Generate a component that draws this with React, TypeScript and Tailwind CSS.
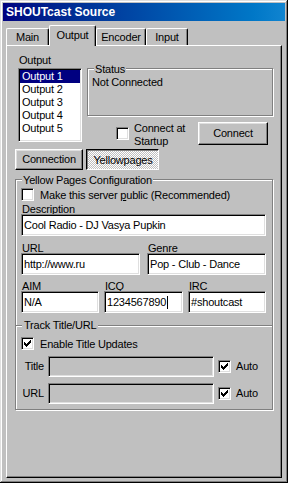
import React from "react";

const sunken =
  "border border-t-[#808080] border-l-[#808080] border-r-white border-b-white shadow-[inset_1px_1px_0_#000,inset_-1px_-1px_0_#dfdfdf]";
const raised =
  "border border-t-white border-l-white border-r-black border-b-black shadow-[inset_-1px_-1px_0_#808080,inset_1px_1px_0_#dfdfdf]";
const etched = "border border-[#808080] shadow-[inset_1px_1px_0_#fff,1px_1px_0_#fff]";

function Check({ checked }: { checked?: boolean }) {
  return (
    <div className={`relative w-[13px] h-[13px] shrink-0 bg-white ${sunken}`}>
      {checked && (
        <svg
          width="7"
          height="7"
          viewBox="0 0 7 7"
          shapeRendering="crispEdges"
          className="absolute left-[2px] top-[2px]"
        >
          <path
            d="M0 2h1v3h-1z M1 3h1v3h-1z M2 4h1v3h-1z M3 3h1v3h-1z M4 2h1v3h-1z M5 1h1v3h-1z M6 0h1v3h-1z"
            fill="#000"
          />
        </svg>
      )}
    </div>
  );
}

function Field({
  className,
  children,
  disabled,
}: {
  className: string;
  children?: React.ReactNode;
  disabled?: boolean;
}) {
  return (
    <div
      className={`${className} ${sunken} ${disabled ? "bg-[#c0c0c0]" : "bg-white"} flex items-center pl-[2px] whitespace-nowrap overflow-hidden`}
    >
      {children}
    </div>
  );
}

function Tab({ label, className }: { label: string; className: string }) {
  return (
    <div
      className={`${className} h-[17px] border-l border-t border-r border-l-white border-t-white border-r-black rounded-t-[2px] shadow-[inset_-1px_0_0_#808080] pt-[2px] text-center`}
    >
      {label}
    </div>
  );
}

function ActiveTab({ label, className }: { label: string; className: string }) {
  return (
    <div
      className={`${className} relative z-10 -mb-px h-[21px] bg-[#c0c0c0] border-l border-t border-r border-l-white border-t-white border-r-black rounded-t-[2px] shadow-[inset_-1px_0_0_#808080] pt-[3px] text-center`}
    >
      {label}
    </div>
  );
}

export default function App() {
  return (
    <div className="w-[288px] h-[483px] bg-[#c0c0c0] p-[3px] flex flex-col font-['Liberation_Sans',Arial,sans-serif] text-[11px] leading-[13px] tracking-[-0.2px] text-black shadow-[inset_-1px_-1px_0_#000,inset_1px_1px_0_#dfdfdf,inset_-2px_-2px_0_#808080,inset_2px_2px_0_#fff]">
      {/* Title bar */}
      <div className="h-[18px] shrink-0 bg-linear-to-r from-[#000080] to-[#1084d0] pl-[3px] pt-px text-white font-bold text-[12px] leading-[17px] tracking-normal">
        SHOUTcast Source
      </div>

      {/* Tabs */}
      <div className="mt-[4px] ml-[3px] h-[20px] shrink-0 flex items-end">
        <Tab label="Main" className="w-[43px]" />
        <ActiveTab label="Output" className="w-[47px]" />
        <Tab label="Encoder" className="w-[50px]" />
        <Tab label="Input" className="w-[42px]" />
      </div>

      {/* Panel */}
      <div className="ml-[3px] w-[276px] h-[433px] shrink-0 flex flex-col border border-t-white border-l-white border-r-black border-b-black shadow-[inset_-1px_-1px_0_#808080]">
        {/* Top section */}
        <div className="flex pt-[8px] pl-[11px]">
          <div className="flex flex-col w-[64px]">
            <div className="h-[14px] pl-px">Output</div>
            <div className={`h-[74px] bg-white ${sunken} p-px flex flex-col`}>
              <div className="h-[13px] bg-[#000080] text-white pl-[2px]">Output 1</div>
              <div className="h-[13px] pl-[2px]">Output 2</div>
              <div className="h-[13px] pl-[2px]">Output 3</div>
              <div className="h-[13px] pl-[2px]">Output 4</div>
              <div className="h-[13px] pl-[2px]">Output 5</div>
            </div>
          </div>

          <div className="ml-[5px] mt-[14px] w-[186px] flex flex-col">
            <div className={`relative h-[48px] ${etched} pt-[7px] pl-[4px]`}>
              <span className="absolute left-[6px] -top-[6px] px-px bg-[#c0c0c0]">Status</span>
              <div>Not Connected</div>
            </div>
            <div className="mt-[6px] flex items-start">
              <div className="ml-[29px] mt-[5px]">
                <Check />
              </div>
              <div className="ml-[5px] w-[58px]">Connect at Startup</div>
              <div className={`ml-[6px] w-[70px] h-[23px] ${raised} flex items-center justify-center`}>
                Connect
              </div>
            </div>
          </div>
        </div>

        {/* Connection / Yellowpages buttons */}
        <div className="mt-px ml-[8px] flex gap-[3px]">
          <div className={`w-[68px] h-[21px] ${raised} flex items-center justify-center`}>
            Connection
          </div>
          <div className="w-[73px] h-[21px] border border-t-black border-l-black border-r-white border-b-white shadow-[inset_1px_1px_0_#808080] bg-[image:repeating-conic-gradient(#fff_0%_25%,#c0c0c0_0%_50%)] bg-[length:2px_2px] flex items-center justify-center pl-px pt-px">
            Yellowpages
          </div>
        </div>

        {/* Yellow Pages Configuration */}
        <div className={`relative mt-[9px] ml-[8px] w-[258px] h-[231px] ${etched} pl-[5px] pt-[8px] flex flex-col`}>
          <span className="absolute left-[6px] -top-[6px] px-px bg-[#c0c0c0]">
            Yellow Pages Configuration
          </span>

          <div className="flex items-start">
            <Check />
            <span className="ml-[6px] mt-px">
              Make this server <span className="underline">p</span>ublic (Recommended)
            </span>
          </div>

          <div className="mt-px h-[11px] leading-[12px] pl-px">Description</div>
          <Field className="w-[245px] h-[22px]">Cool Radio - DJ Vasya Pupkin</Field>

          <div className="mt-[6px] flex gap-[7px]">
            <div className="flex flex-col w-[119px]">
              <div className="h-[11px] leading-[12px] pl-px">URL</div>
              <Field className="w-[119px] h-[22px]">http://www.ru</Field>
            </div>
            <div className="flex flex-col w-[119px]">
              <div className="h-[11px] leading-[12px] pl-px">Genre</div>
              <Field className="w-[119px] h-[22px]">Pop - Club - Dance</Field>
            </div>
          </div>

          <div className="mt-[5px] flex gap-[5px]">
            <div className="flex flex-col w-[78px]">
              <div className="h-[11px] leading-[12px] pl-px">AIM</div>
              <Field className="w-[78px] h-[22px]">N/A</Field>
            </div>
            <div className="flex flex-col w-[79px]">
              <div className="h-[11px] leading-[12px] pl-px">ICQ</div>
              <Field className="w-[79px] h-[22px]">
                1234567890
                <span className="ml-px inline-block w-px h-[13px] bg-black" />
              </Field>
            </div>
            <div className="flex flex-col w-[78px]">
              <div className="h-[11px] leading-[12px] pl-px">IRC</div>
              <Field className="w-[78px] h-[22px]">#shoutcast</Field>
            </div>
          </div>

          {/* Track Title/URL */}
          <div className="mt-[6px] -ml-[5px] w-[256px] h-[13px] flex items-start">
            <div className="mt-[6px] w-[6px] h-[2px] border-t border-t-[#808080] border-b border-b-white" />
            <span className="px-[2px]">Track Title/URL</span>
            <div className="mt-[6px] flex-1 h-[2px] border-t border-t-[#808080] border-b border-b-white" />
          </div>

          <div className="mt-[5px] flex items-start">
            <Check checked />
            <span className="ml-[6px] mt-px">Enable Title Updates</span>
          </div>

          <div className="mt-[5px] -ml-[5px] flex items-center">
            <div className="w-[28px] text-right">Title</div>
            <Field disabled className="ml-[4px] w-[166px] h-[21px]" />
            <div className="ml-[4px]">
              <Check checked />
            </div>
            <span className="ml-[5px]">Auto</span>
          </div>

          <div className="mt-[6px] -ml-[5px] flex items-center">
            <div className="w-[28px] text-right">URL</div>
            <Field disabled className="ml-[4px] w-[166px] h-[21px]" />
            <div className="ml-[4px]">
              <Check checked />
            </div>
            <span className="ml-[5px]">Auto</span>
          </div>
        </div>
      </div>
    </div>
  );
}
